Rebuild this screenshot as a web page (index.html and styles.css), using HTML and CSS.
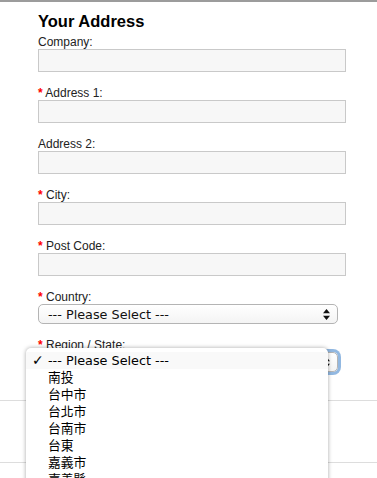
FILE: index.html
```html
<!DOCTYPE html>
<html lang="zh-Hant">
<head>
  <meta charset="UTF-8">
  <title>Your Address</title>
  <link rel="stylesheet" href="styles.css">
</head>
<body>

  <div class="address-form">
    <h2>Your Address</h2>

    <div class="field">
      <label>Company:</label>
      <input type="text">
    </div>

    <div class="field">
      <label><span class="required">*</span> Address 1:</label>
      <input type="text">
    </div>

    <div class="field">
      <label>Address 2:</label>
      <input type="text">
    </div>

    <div class="field">
      <label><span class="required">*</span> City:</label>
      <input type="text">
    </div>

    <div class="field">
      <label><span class="required">*</span> Post Code:</label>
      <input type="text">
    </div>

    <div class="field">
      <label><span class="required">*</span> Country:</label>
      <div class="select">
        <span>--- Please Select ---</span>
        <svg class="arrows" width="7" height="11" viewBox="0 0 7 11"><path d="M3.5 0L7 4.2H0z M3.5 11L0 6.8h7z" fill="#111"/></svg>
      </div>
    </div>

    <div class="field region">
      <label><span class="required">*</span> Region / State:</label>
      <div class="select focused">
        <span>--- Please Select ---</span>
        <svg class="arrows" width="7" height="11" viewBox="0 0 7 11"><path d="M3.5 0L7 4.2H0z M3.5 11L0 6.8h7z" fill="#111"/></svg>
      </div>

      <!-- open dropdown list -->
      <ul class="dropdown">
        <li class="checked"><span class="check">✓</span>--- Please Select ---</li>
        <li>南投</li>
        <li>台中市</li>
        <li>台北市</li>
        <li>台南市</li>
        <li>台東</li>
        <li>嘉義市</li>
        <li>嘉義縣</li>
      </ul>
    </div>
  </div>

  <div class="buttons"></div>
  <div class="page-rest"></div>

</body>
</html>
```

FILE: styles.css
```css
/* Global */
* {
  margin: 0;
  padding: 0;
  box-sizing: border-box;
}

body {
  font-family: 'Liberation Sans', Arial, sans-serif;
  background: #fff;
  color: #222;
  border-top: 2px solid #9c9c9c;
}

/* Form */
.address-form {
  padding: 0 38px;
}

.address-form h2 {
  font-size: 16.5px;
  line-height: 20px;
  font-weight: 700;
  color: #000;
  margin: 9px 0 4px;
}

.field {
  margin-bottom: 14px;
}

.field label {
  display: block;
  font-size: 12px;
  line-height: 14px;
  color: #222;
}

.required {
  color: #f00;
  font-weight: 700;
}

.field input {
  display: block;
  width: 308px;
  height: 23px;
  border: 1px solid #c9c9c9;
  background: #f7f7f7;
}

/* Select boxes */
.select {
  display: flex;
  align-items: center;
  justify-content: space-between;
  width: 300px;
  height: 20px;
  padding: 0 7px 0 9px;
  border: 1px solid #b4b4b4;
  border-radius: 5px;
  background: linear-gradient(#fff, #f4f4f4);
  font-family: 'DejaVu Sans', sans-serif;
  font-size: 12.8px;
  color: #111;
}

.select.focused {
  box-shadow: 0 0 0 3px rgba(110, 160, 215, 0.75);
}

.region {
  position: relative;
}

/* Dropdown list */
.dropdown {
  position: absolute;
  top: 10px;
  left: -12px;
  width: 302px;
  height: 140px;
  overflow: hidden;
  list-style: none;
  padding-top: 4px;
  background: #fff;
  border-radius: 5px 5px 0 0;
  box-shadow: 0 0 4px rgba(0, 0, 0, 0.35);
  z-index: 10;
}

.dropdown li {
  height: 17px;
  line-height: 17px;
  padding-left: 22px;
  font-family: 'DejaVu Sans', 'Noto Sans CJK TC', sans-serif;
  font-size: 12.8px;
  color: #000;
  position: relative;
}

.dropdown li.checked {
  background: #f9f9f9;
}

.check {
  position: absolute;
  left: 6px;
  font-size: 14px;
  font-weight: 700;
}

/* Buttons bar */
.buttons {
  margin-top: 28px;
  height: 63px;
  border-top: 1px solid #ddd;
  border-bottom: 1px solid #ddd;
}

.page-rest {
  height: 60px;
}
```
